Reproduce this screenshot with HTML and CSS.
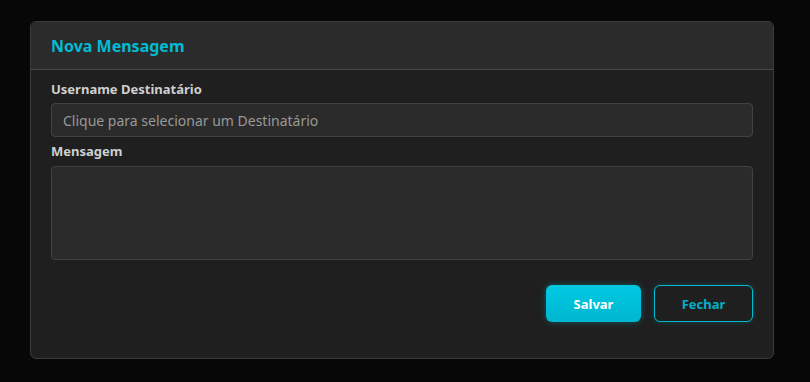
FILE: index.html
```html
<!DOCTYPE html>
<html lang="pt">
<head>
    <meta charset="UTF-8">
    <meta name="viewport" content="width=device-width, initial-scale=1.0">
    <title>Nova Mensagem</title>
    <link rel="stylesheet" href="styles.css">
</head>
<body>
    <div class="modal">
        <div class="modal-header">
            <h2>Nova Mensagem</h2>
        </div>
        <form class="modal-body">
            <label for="dest">Username Destinatário</label>
            <input type="text" id="dest" placeholder="Clique para selecionar um Destinatário" readonly>
            <label for="msg">Mensagem</label>
            <textarea id="msg"></textarea>
            <div class="actions">
                <button type="button" class="btn btn-save">Salvar</button>
                <button type="button" class="btn btn-close">Fechar</button>
            </div>
        </form>
    </div>
</body>
</html>
```

FILE: styles.css
```css
body {margin: 0; background: #070707; font-family: "Noto Sans", "Open Sans", sans-serif; padding: 21px 36px 0 30px;}
.modal {border: 1px solid #3a3a3a; border-radius: 6px; background: #1f1f1f; overflow: hidden; box-sizing: border-box; height: 338px;}
.modal-header {background: #2b2b2b; height: 47px; border-bottom: 1px solid #4a4a4a; padding: 0 20px; display: flex; align-items: center;}
.modal-header h2 {margin: 0; font-size: 16px; font-weight: 700; color: #00bcd4;}
.modal-body {display: flex; flex-direction: column; padding: 10px 20px 0;}
.modal-body label {font-size: 13px; font-weight: 700; color: #cfcfcf; line-height: 18px; margin-bottom: 5px;}
.modal-body input, .modal-body textarea {background: #2b2b2b; border: 1px solid #424242; border-radius: 4px; box-sizing: border-box; font-family: inherit; font-size: 14px; color: #ddd; outline: none;}
.modal-body input {height: 34px; padding: 0 11px; margin-bottom: 5px;}
.modal-body input::placeholder {color: #999;}
.modal-body textarea {height: 94px; resize: none; padding: 8px 11px; margin-top: 1px;}
.actions {display: flex; justify-content: flex-end; gap: 13px; margin-top: 25px;}
.btn {height: 37px; border-radius: 6px; font-family: inherit; font-size: 13px; font-weight: 700; cursor: pointer; box-sizing: border-box;}
.btn-save {width: 95px; border: none; color: #fff; background: linear-gradient(#00c9e2, #00b7d1); box-shadow: 0 0 6px rgba(0, 200, 230, 0.35);}
.btn-close {width: 99px; border: 1px solid #00bcd4; background: #1f1f1f; color: #00b0c8; box-shadow: 0 0 5px rgba(0, 200, 230, 0.25);}
```
